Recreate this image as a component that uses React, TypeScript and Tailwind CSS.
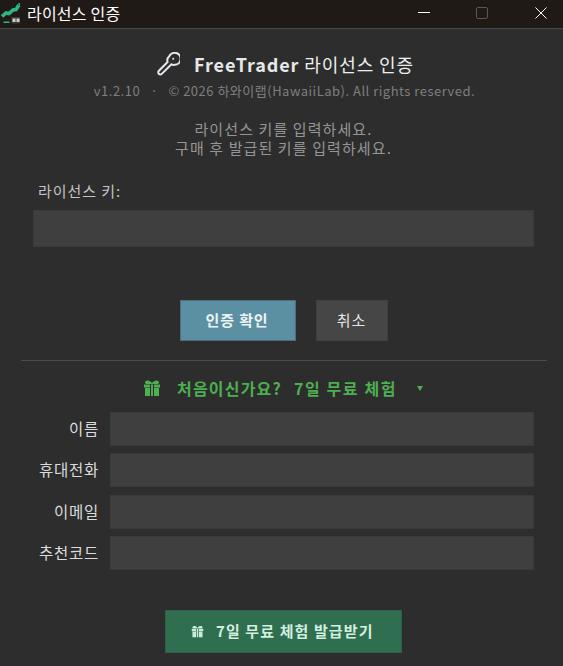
import React from 'react';

const font = '[font-family:"Noto_Sans_CJK_KR","Noto_Sans",sans-serif]';

function AppLogo() {
    return (
        <svg width="20" height="23" viewBox="0 0 20 23" className="shrink-0">
            <path d="M1 15.5 L5 12 L8 12.5 L12 9 L15 8.5 L18 4" fill="none" stroke="#2ab886" strokeWidth="3.6" />
            <path d="M17 2 L19 2 L19 5 Z" fill="#2ab886" />
            <rect x="2.5" y="20.5" width="6" height="1.5" fill="#2ab886" />
            <rect x="10.5" y="16" width="8.5" height="6.5" fill="#3a3a38" />
            <rect x="11.5" y="17.5" width="3" height="3.5" fill="#cfcfcf" />
            <rect x="15.5" y="17.5" width="3" height="3.5" fill="#cfcfcf" />
        </svg>
    );
}

function KeyIcon() {
    return (
        <svg width="24" height="24" viewBox="0 0 24 24" fill="none" stroke="#e4e8ec" strokeWidth="2">
            <path d="M13.2 4.2 a6 6 0 1 1 5.6 8.6 c-1.2 .2 -2.6 0 -3.4 -.6 L6 21.6 c-1 1 -2.4 1 -3.2 .2 c-.9 -.9 -.8 -2.2 .1 -3.1 L11.6 10 c-.6 -1.6 -.3 -4 1.6 -5.8 Z" />
            <circle cx="17.2" cy="6.8" r="1" fill="#e4e8ec" stroke="none" />
        </svg>
    );
}

function GiftIcon({ color, size }: { color: string; size: number }) {
    return (
        <svg width={size} height={size} viewBox="0 0 18 18">
            <path d="M2 3 C3 0.5 7 1 9 4 C11 1 15 0.5 16 3 C16.5 4.5 15 5 14 5 H4 C3 5 1.5 4.5 2 3 Z" fill={color} />
            <rect x="1" y="5.5" width="6" height="3" fill={color} />
            <rect x="11" y="5.5" width="6" height="3" fill={color} />
            <rect x="2" y="9" width="5" height="8" fill={color} />
            <rect x="11" y="9" width="5" height="8" fill={color} />
            <rect x="8" y="5.5" width="2" height="11.5" fill={color} />
        </svg>
    );
}

function TrialRow({ label, className }: { label: string; className: string }) {
    return (
        <div className={`flex items-center ${className}`}>
            <label className="w-[99px] text-right text-[15.5px] tracking-[0.75px] leading-none text-[#dcdcdc]">{label}</label>
            <div className="ml-[11px] flex-1 h-full bg-[#3f3f3f] border border-[#3a3a3a]" />
        </div>
    );
}

export default function App() {
    return (
        <div className={`w-[563px] h-[666px] overflow-hidden flex flex-col bg-[#2d2d2d] ${font}`}>
            {/* title bar */}
            <div className="h-[29px] shrink-0 flex items-center bg-[#201a17] border-b border-[#4a4a4a] pl-[1px] pb-[3px]">
                <AppLogo />
                <span className="ml-[6px] text-[16px] tracking-[0.2px] leading-none text-white">라이선스 인증</span>
                <div className="ml-auto flex items-center h-full">
                    <div className="w-[12px] h-[1px] bg-white mr-[46px]" />
                    <div className="w-[12px] h-[12px] rounded-[2px] border border-[#5a5655] mr-[47px]" />
                    <svg width="12" height="12" viewBox="0 0 12 12" className="mr-[16px]">
                        <path d="M0.5 0.5 L11.5 11.5 M11.5 0.5 L0.5 11.5" stroke="#fff" strokeWidth="1" />
                    </svg>
                </div>
            </div>

            <div className="flex-1 flex flex-col">
                <div className="mt-[21px] h-[28px] flex items-center pl-[156px]">
                    <KeyIcon />
                    <h1 className="ml-[14px] text-[18px] tracking-[0.9px] leading-none font-bold text-[#e6e8ea]">
                        FreeTrader <span className="font-normal text-[#eceef0]">라이선스 인증</span>
                    </h1>
                </div>
                <p className="mt-[3px] pl-[6px] text-center text-[13px] tracking-[0.5px] leading-[20px] text-[#7f7f7f] whitespace-pre">v1.2.10   ·   © 2026 하와이랩(HawaiiLab). All rights reserved.</p>

                <div className="mt-[18px] pl-[4px] text-center text-[15px] tracking-[1.1px] leading-[19px] text-[#959595]">
                    <p>라이선스 키를 입력하세요.</p>
                    <p>구매 후 발급된 키를 입력하세요.</p>
                </div>

                <label className="mt-[24px] ml-[38px] text-[15px] tracking-[0.95px] leading-[20px] text-[#c4c4c4]">라이선스 키:</label>
                <div className="mt-[9px] mx-[33px] w-[501px] h-[37px] bg-[#3f3f3f] border border-[#3a3a3a]" />

                <div className="mt-[53px] flex gap-[20px] pl-[180px]">
                    <button className="w-[116px] h-[41px] pr-[2px] bg-[#5b8fa2] border border-[#4f6d79] text-[15px] tracking-[0.9px] font-bold text-[#eef3f5]">인증 확인</button>
                    <button className="w-[72px] h-[41px] pr-[1px] bg-[#464646] border border-[#404040] text-[15px] tracking-[0.9px] text-[#e6e6e6]">취소</button>
                </div>

                <div className="mt-[19px] ml-[21px] w-[526px] h-[1px] bg-[#4c4c4c]" />

                <div className="mt-[17px] h-[20px] flex items-center pl-[143px]">
                    <GiftIcon color="#4caf50" size={18} />
                    <span className="ml-[16px] text-[16px] tracking-[1.2px] leading-none font-bold text-[#4caf50]">처음이신가요?</span>
                    <span className="ml-[12px] text-[16px] tracking-[1.6px] leading-none font-bold text-[#4caf50]">7일 무료 체험</span>
                    <span className="ml-[20px] w-0 h-0 border-x-[3.5px] border-x-transparent border-t-[5px] border-t-[#4caf50]" />
                </div>

                <div className="mt-[14px] mr-[29px] flex flex-col">
                    <TrialRow label="이름" className="h-[34px]" />
                    <TrialRow label="휴대전화" className="mt-[7px] h-[34px]" />
                    <TrialRow label="이메일" className="mt-[8px] h-[34px]" />
                    <TrialRow label="추천코드" className="mt-[7px] h-[34px]" />
                </div>

                <div className="mt-[40px] pl-[165px]">
                    <button className="w-[237px] h-[43px] bg-[#2f6e4f] border border-[#2b6148] flex items-center pl-[25px] text-[15px] tracking-[1.1px] font-bold text-[#d3efe0]">
                        <GiftIcon color="#c8ecd9" size={13} />
                        <span className="ml-[12px]">7일 무료 체험 발급받기</span>
                    </button>
                </div>
            </div>
        </div>
    );
}
